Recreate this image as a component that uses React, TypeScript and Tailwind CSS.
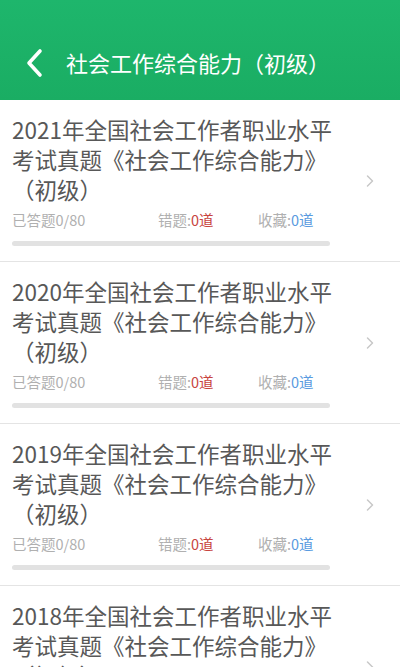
import { ChevronRight } from "lucide-react";

const years = ["2021", "2020", "2019", "2018"];

function PaperItem({ year }: { year: string }) {
  return (
    <div className="flex items-center border-b border-[#e4e4e4] bg-white h-[162px] shrink-0">
      <div className="flex-1 pl-[12px] pt-[15px] pb-[16px]">
        <div className="w-[326px] text-[22.5px] leading-[30px] text-[#585858]">
          {year}年全国社会工作者职业水平考试真题《社会工作综合能力》（初级）
        </div>
        <div className="grid grid-cols-[146px_100px_auto] h-[28px] mt-[2px] items-center text-[14.5px] text-[#b0b0b0]">
          <span>已答题0/80</span>
          <span>
            错题:<span className="text-[#c8453f]">0道</span>
          </span>
          <span>
            收藏:<span className="text-[#5a9be0]">0道</span>
          </span>
        </div>
        <div className="mt-[7px] h-[5px] w-[318px] rounded-full bg-[#e2e2e2]" />
      </div>
      <ChevronRight className="mr-[20px] text-[#c8c8c8]" size={20} strokeWidth={1.8} />
    </div>
  );
}

export default function App() {
  return (
    <div
      className="w-[400px] h-[667px] overflow-hidden bg-white flex flex-col"
      style={{ fontFamily: '"Noto Sans CJK SC", "Noto Sans", sans-serif' }}
    >
      <div className="h-[100px] shrink-0 bg-gradient-to-b from-[#1eb66c] to-[#1aad63] flex items-end">
        <div className="h-[70px] w-full flex items-center pb-[5px]">
          <svg width="20" height="30" viewBox="0 0 20 30" className="ml-[24px]">
            <polyline
              points="16,3 5,15 16,27"
              fill="none"
              stroke="white"
              strokeWidth="3.6"
              strokeLinecap="round"
              strokeLinejoin="round"
            />
          </svg>
          <span className="ml-[22px] text-[22px] text-white">社会工作综合能力（初级）</span>
        </div>
      </div>
      {years.map((y) => (
        <PaperItem key={y} year={y} />
      ))}
    </div>
  );
}
